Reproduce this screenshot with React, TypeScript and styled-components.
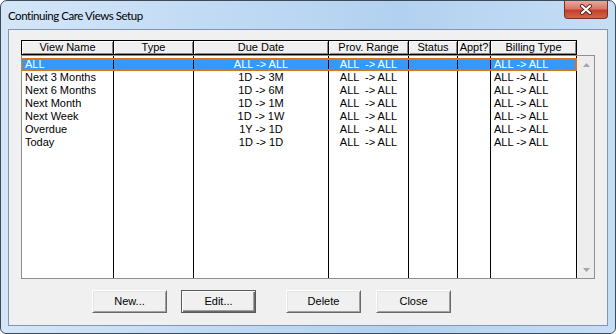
import styled, { createGlobalStyle } from "styled-components";

// page reset
const GlobalStyle = createGlobalStyle`
    html, body {
        margin: 0;
        padding: 0;
        background: #ffffff;
        overflow: hidden;
    }
`;

// outer window with the aero frame
const Window = styled.div`
    width: 616px;
    height: 334px;
    box-sizing: border-box;
    border: 1px solid #3f4a58;
    border-radius: 7px 7px 6px 6px;
    background: linear-gradient(90deg, #d4e6f8 0%, #c3dcf5 30%, #b2d1f0 65%, #c6def6 100%);
    display: flex;
    flex-direction: column;
    overflow: hidden;
    font-family: "Liberation Sans", Arial, sans-serif;
`;

const TitleBar = styled.div`
    height: 28px;
    display: flex;
    align-items: flex-start;
`;

const Title = styled.div`
    font-family: Lato, "Liberation Sans", sans-serif;
    font-size: 11.5px;
    letter-spacing: -0.45px;
    line-height: 15px;
    color: #000;
    padding: 7px 0 0 7px;
`;

const CloseButton = styled.div`
    margin-left: auto;
    margin-right: 7px;
    width: 44px;
    height: 18px;
    box-sizing: border-box;
    border: 1px solid #7b2f22;
    border-top: none;
    border-radius: 0 0 4px 4px;
    background: linear-gradient(180deg, #e9a899 0%, #d8776a 45%, #c2402b 55%, #d2654c 100%);
    display: flex;
    align-items: center;
    justify-content: center;
`;

// client area of the dialog
const Client = styled.div`
    flex: 1;
    margin: 0 7px 7px 7px;
    border: 1px solid #8396ad;
    background: #f0f0f0;
    padding: 10px 0 0 12px;
    display: flex;
    flex-direction: column;
`;

const Header = styled.div`
    display: flex;
    height: 15px;
`;

const HeaderCell = styled.div<{ $w: number; $first?: boolean }>`
    width: ${(p) => p.$w}px;
    box-sizing: border-box;
    height: 15px;
    border: 1px solid #000;
    border-left: ${(p) => (p.$first ? "1px solid #000" : "none")};
    box-shadow: inset 1px 1px #ffffff, inset -1px -1px #8a8a8a;
    background: #f0f0f0;
    font-size: 11px;
    line-height: 13px;
    text-align: center;
    white-space: nowrap;
    overflow: hidden;
`;

const ListBox = styled.div`
    width: 574px;
    height: 224px;
    box-sizing: border-box;
    border: 1px solid #8e8f8f;
    background: #ffffff;
    display: flex;
`;

const Rows = styled.div`
    width: 555px;
    display: flex;
    flex-direction: column;
`;

const Row = styled.div<{ $selected?: boolean; $h?: number }>`
    position: relative;
    display: flex;
    height: ${(p) => (p.$h ?? 13)}px;
    flex-shrink: 0;
    background: ${(p) => (p.$selected ? "#3399ff" : "transparent")};
    color: ${(p) => (p.$selected ? "#ffffff" : "#000000")};

    &::after {
        content: "";
        display: ${(p) => (p.$selected ? "block" : "none")};
        position: absolute;
        inset: 0;
        border: 2px solid #d9731c;
        border-left-width: 1px;
        pointer-events: none;
    }
`;

const FillerRow = styled.div`
    display: flex;
    flex: 1;
`;

const Cell = styled.div<{ $w: number; $align?: string }>`
    width: ${(p) => p.$w}px;
    box-sizing: border-box;
    border-right: 1px solid #000;
    padding: 0 3px;
    font-size: 11px;
    line-height: 13px;
    text-align: ${(p) => p.$align ?? "left"};
    white-space: pre;
    overflow: hidden;
`;

const ScrollBar = styled.div`
    width: 17px;
    background: #ededed;
    border-left: 1px solid #f4f4f4;
    box-sizing: border-box;
    display: flex;
    flex-direction: column;
    justify-content: space-between;
`;

const ArrowBox = styled.div`
    height: 17px;
    display: flex;
    align-items: center;
    justify-content: center;
`;

const ButtonRow = styled.div`
    display: flex;
    margin-top: 11px;
    padding-left: 71px;
`;

const Button = styled.div<{ $gap: number; $default?: boolean }>`
    width: 75px;
    height: 23px;
    box-sizing: border-box;
    margin-left: ${(p) => p.$gap}px;
    background: #f0f0f0;
    border: 1px solid;
    border-color: ${(p) => (p.$default ? "#5a5a5a" : "#ffffff #6a6a6a #6a6a6a #ffffff")};
    box-shadow: ${(p) =>
        p.$default
            ? "inset 1px 1px #ffffff, inset -1px -1px #6a6a6a, inset -2px -2px #a0a0a0"
            : "inset 1px 1px #e3e3e3, inset -1px -1px #a0a0a0"};
    font-size: 11px;
    line-height: 21px;
    text-align: center;
    color: #000;
`;

const columns = [
    { name: "View Name", w: 92, align: "left" },
    { name: "Type", w: 80, align: "left" },
    { name: "Due Date", w: 135, align: "center" },
    { name: "Prov. Range", w: 80, align: "center" },
    { name: "Status", w: 49, align: "left" },
    { name: "Appt?", w: 33, align: "left" },
    { name: "Billing Type", w: 86, align: "left" },
];

const views = [
    ["ALL", "", "ALL -> ALL", "ALL  -> ALL", "", "", "ALL -> ALL"],
    ["Next 3 Months", "", "1D -> 3M", "ALL  -> ALL", "", "", "ALL -> ALL"],
    ["Next 6 Months", "", "1D -> 6M", "ALL  -> ALL", "", "", "ALL -> ALL"],
    ["Next Month", "", "1D -> 1M", "ALL  -> ALL", "", "", "ALL -> ALL"],
    ["Next Week", "", "1D -> 1W", "ALL  -> ALL", "", "", "ALL -> ALL"],
    ["Overdue", "", "1Y -> 1D", "ALL  -> ALL", "", "", "ALL -> ALL"],
    ["Today", "", "1D -> 1D", "ALL  -> ALL", "", "", "ALL -> ALL"],
];

function EmptyCells() {
    return (
        <>
            {columns.map((c) => (
                <Cell key={c.name} $w={c.w} />
            ))}
        </>
    );
}

export default function App() {
    return (
        <>
            <GlobalStyle />
            <Window>
                <TitleBar>
                    <Title>Continuing Care Views Setup</Title>
                    <CloseButton>
                        <svg width="14" height="11" viewBox="0 0 14 11">
                            <path d="M3 2 L11 9 M11 2 L3 9" stroke="#5e2418" strokeWidth="4" strokeLinecap="round" />
                            <path d="M3 2 L11 9 M11 2 L3 9" stroke="#ffffff" strokeWidth="2.2" strokeLinecap="round" />
                        </svg>
                    </CloseButton>
                </TitleBar>
                <Client>
                    <Header>
                        {columns.map((c, i) => (
                            <HeaderCell key={c.name} $w={i === 0 ? c.w + 1 : c.w} $first={i === 0}>
                                {c.name}
                            </HeaderCell>
                        ))}
                    </Header>
                    <ListBox>
                        <Rows>
                            <Row $h={2}>
                                <EmptyCells />
                            </Row>
                            {views.map((v, r) => (
                                <Row key={v[0]} $selected={r === 0}>
                                    {columns.map((c, i) => (
                                        <Cell key={c.name} $w={c.w} $align={c.align}>
                                            {v[i]}
                                        </Cell>
                                    ))}
                                </Row>
                            ))}
                            <FillerRow>
                                <EmptyCells />
                            </FillerRow>
                        </Rows>
                        <ScrollBar>
                            <ArrowBox>
                                <svg width="7" height="4" viewBox="0 0 7 4">
                                    <path d="M3.5 0 L7 4 L0 4 Z" fill="#a6a6a6" />
                                </svg>
                            </ArrowBox>
                            <ArrowBox>
                                <svg width="7" height="4" viewBox="0 0 7 4">
                                    <path d="M0 0 L7 0 L3.5 4 Z" fill="#a6a6a6" />
                                </svg>
                            </ArrowBox>
                        </ScrollBar>
                    </ListBox>
                    <ButtonRow>
                        <Button $gap={0}>New...</Button>
                        <Button $gap={14} $default>Edit...</Button>
                        <Button $gap={30}>Delete</Button>
                        <Button $gap={15}>Close</Button>
                    </ButtonRow>
                </Client>
            </Window>
        </>
    );
}
